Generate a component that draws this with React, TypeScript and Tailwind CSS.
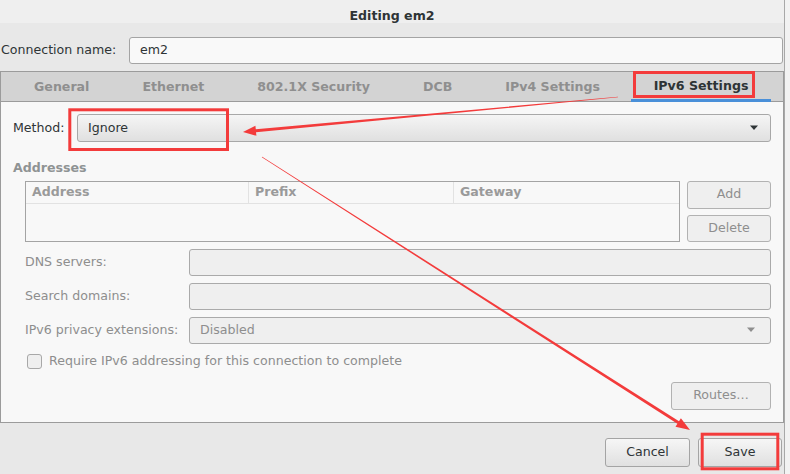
import React from 'react';

const tabs = ['General', 'Ethernet', '802.1X Security', 'DCB', 'IPv4 Settings', 'IPv6 Settings'];

const Caret = ({ color }: { color: string }) => (
  <svg width="10" height="6" viewBox="0 0 10 6" className="shrink-0">
    <path d="M1 0.5h8L5 5z" fill={color} />
  </svg>
);

const Field = ({ label, children }: { label: string; children?: React.ReactNode }) => (
  <div className="flex items-center h-[27px]">
    <div className="w-[164px] text-[#8e8e8e] pt-[1px]">{label}</div>
    <div className="flex-1 h-full flex items-center pl-[10px] pr-[14px] bg-[#efefef] border border-[#aaaaaa] rounded-[3px] text-[#8e8e8e]">
      {children}
    </div>
  </div>
);

const Annotations = () => (
  <svg className="absolute inset-0 pointer-events-none" width="790" height="474" viewBox="0 0 790 474">
    <g fill="none" stroke="#f33b3b" strokeWidth="3">
      <rect x="634.5" y="72.5" width="119" height="24" />
      <rect x="69.8" y="109.8" width="157.7" height="39.7" />
      <rect x="702.2" y="434.2" width="75.6" height="34.6" />
    </g>
    <g fill="#f33b3b">
      <polygon points="618,96.7 255.8,129.3 255.4,125.8 243,132 256.4,135.8 256,132.3 618,97.3" />
      <polygon points="262.2,156.7 679,421.2 680.9,418.3 690,430 675.5,426.7 677.4,423.8 261.8,157.3" />
    </g>
  </svg>
);

export default function App() {
  return (
    <div className="relative w-[790px] h-[474px] flex bg-[#f2f2f2] text-[12.6px] leading-none text-[#2e3436] font-['DejaVu_Sans',sans-serif] overflow-hidden">
      <div className="w-[785px] flex flex-col bg-[#e8e8e8] border-r border-[#a8a8a8]">
        {/* title */}
        <div className="h-[23px] shrink-0 bg-[#efefef] flex items-center justify-center pt-[9px] font-bold text-[#2e3436]">
          Editing em2
        </div>

        {/* connection name */}
        <div className="flex items-center mt-[14px] h-[27px]">
          <div className="pl-[1px] w-[129px]">Connection name:</div>
          <div className="flex-1 h-full flex items-center pl-[10px] bg-[#f9f9f9] border border-[#a4a4a4] rounded-[3px] mr-[1px]">
            em2
          </div>
        </div>

        {/* notebook */}
        <div className="mt-[7px] flex flex-col border-x border-b border-[#9b9b9b]">
          <div className="h-[31px] flex items-stretch gap-[9px] pl-[11px] bg-[#d3d3d3] border-t border-b border-[#9b9b9b] font-bold">
            {tabs.map((t, i) =>
              i === tabs.length - 1 ? (
                <div key={t} className="w-[140px] flex items-center justify-center text-[#2e3436] border-b-[3px] border-[#4a90d9] -mb-px pt-[2px]">
                  {t}
                </div>
              ) : (
                <div key={t} className="px-[22px] flex items-center justify-center text-[#8f8f8f] pt-[1px]">
                  {t}
                </div>
              )
            )}
          </div>

          <div className="h-[320px] bg-[#f8f8f8] px-[12px] pt-[12px] flex flex-col">
            {/* method */}
            <div className="flex items-center h-[28px]">
              <div className="w-[64px]">Method:</div>
              <div className="flex-1 h-full flex items-center justify-between pl-[10px] pr-[11px] border border-[#a8a8a8] rounded-[3px] bg-gradient-to-b from-[#f5f5f5] to-[#e0e0e0]">
                <span>Ignore</span>
                <Caret color="#2e3436" />
              </div>
            </div>

            <div className="mt-[20px] font-bold text-[#8f9394]">Addresses</div>

            <div className="mt-[6px] pl-[12px] flex gap-[7px] h-[61px]">
              <div className="flex-1 border border-[#a4a4a4] flex flex-col bg-[#f8f8f8]">
                <div className="h-[22px] flex border-b border-[#e2e2e2] font-bold text-[#9a9a9a]">
                  <div className="w-[223px] flex items-center pl-[6px] border-r border-[#e2e2e2]">Address</div>
                  <div className="w-[205px] flex items-center pl-[6px] border-r border-[#e2e2e2]">Prefix</div>
                  <div className="flex-1 flex items-center pl-[6px]">Gateway</div>
                </div>
              </div>
              <div className="w-[84px] flex flex-col gap-[6px]">
                <div className="h-[28px] flex items-center justify-center bg-[#efefef] border border-[#b2b2b2] rounded-[3px] text-[#8e8e8e]">Add</div>
                <div className="h-[27px] flex items-center justify-center bg-[#efefef] border border-[#b2b2b2] rounded-[3px] text-[#8e8e8e]">Delete</div>
              </div>
            </div>

            <div className="pl-[12px] mt-[7px] flex flex-col gap-[7px]">
              <Field label="DNS servers:" />
              <Field label="Search domains:" />
              <Field label="IPv6 privacy extensions:">
                <span className="flex-1">Disabled</span>
                <Caret color="#8e8e8e" />
              </Field>
            </div>

            <div className="pl-[14px] mt-[10px] flex items-center gap-[7px] h-[15px] text-[#8e8e8e]">
              <div className="w-[15px] h-[15px] rounded-[3px] border border-[#a8a8a8] bg-[#efefef]" />
              <span>Require IPv6 addressing for this connection to complete</span>
            </div>

            <div className="mt-[13px] flex justify-end">
              <div className="w-[100px] h-[28px] flex items-center justify-center bg-[#efefef] border border-[#b2b2b2] rounded-[3px] text-[#8e8e8e]">
                Routes…
              </div>
            </div>
          </div>
        </div>

        {/* buttons */}
        <div className="mt-[15px] flex justify-end gap-[8px] pr-[2px]">
          <div className="w-[85px] h-[29px] flex items-center justify-center border border-[#a4a4a4] rounded-[3px] bg-gradient-to-b from-[#f6f6f6] to-[#e0e0e0]">
            Cancel
          </div>
          <div className="w-[84px] h-[29px] flex items-center justify-center border border-[#a4a4a4] rounded-[3px] bg-gradient-to-b from-[#f6f6f6] to-[#e0e0e0]">
            Save
          </div>
        </div>
      </div>
      <div className="flex-1" />
      <Annotations />
    </div>
  );
}
